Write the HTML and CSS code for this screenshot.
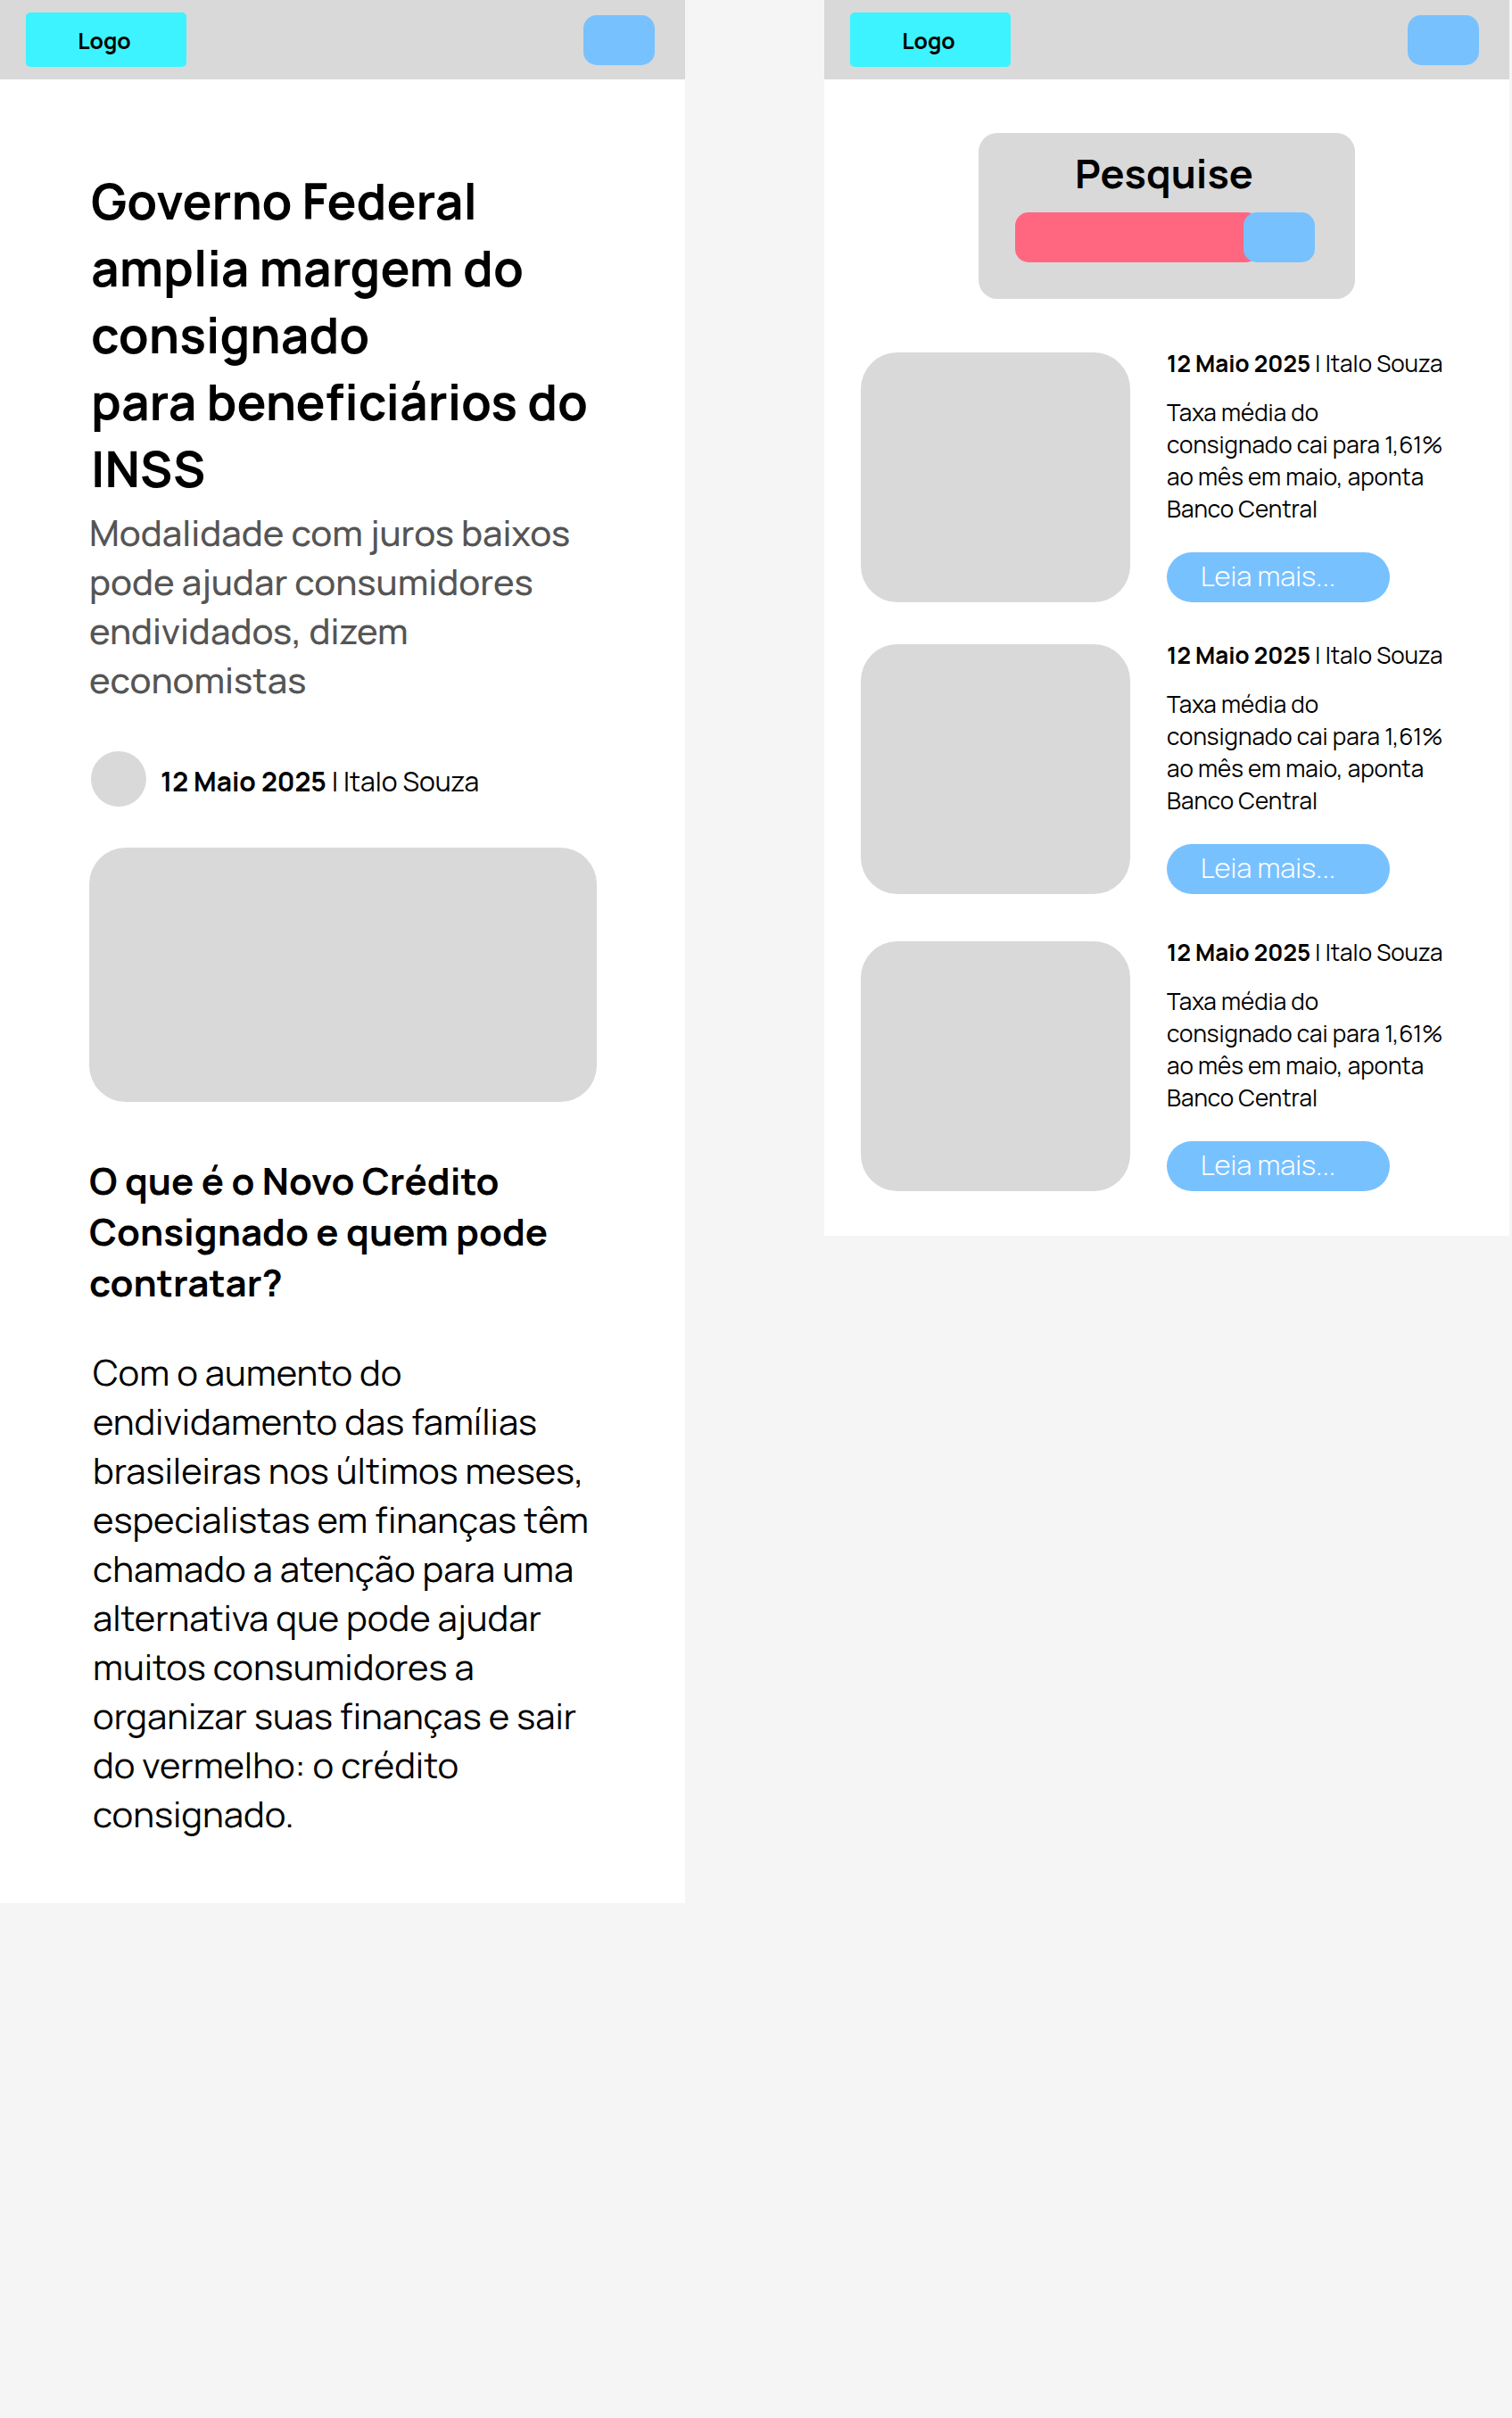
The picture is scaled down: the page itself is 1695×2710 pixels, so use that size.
FILE: index.html
```html
<!DOCTYPE html>
<html lang="pt-BR">
<head>
  <meta charset="utf-8">
  <meta name="viewport" content="width=device-width, initial-scale=1">
  <title>Crédito consignado</title>
  <link rel="stylesheet" href="styles.css">
</head>
<body class="board">
  <section class="screen">
    <header class="topbar">
      <a class="logo" href="#">Logo</a>
      <button class="square-button" type="button" aria-label="Menu"></button>
    </header>
    <main class="article">
      <h1 class="title">Governo Federal<br>amplia margem do<br>consignado<br>para beneficiários do<br>INSS</h1>
      <p class="subtitle">Modalidade com juros baixos<br>pode ajudar consumidores<br>endividados, dizem<br>economistas</p>
      <div class="byline">
        <span class="avatar"></span>
        <p class="byline-text"><strong>12 Maio 2025</strong> I Italo Souza</p>
      </div>
      <div class="cover"></div>
      <h2 class="section-title">O que é o Novo Crédito<br>Consignado e quem pode<br>contratar?</h2>
      <p class="body-text">Com o aumento do<br>endividamento das famílias<br>brasileiras nos últimos meses,<br>especialistas em finanças têm<br>chamado a atenção para uma<br>alternativa que pode ajudar<br>muitos consumidores a<br>organizar suas finanças e sair<br>do vermelho: o crédito<br>consignado.</p>
    </main>
  </section>

  <section class="screen">
    <header class="topbar">
      <a class="logo" href="#">Logo</a>
      <button class="square-button" type="button" aria-label="Menu"></button>
    </header>
    <main class="listing">
      <form class="search">
        <label class="search-label" for="q">Pesquise</label>
        <div class="search-row">
          <input class="search-input" id="q" type="text">
          <button class="square-button search-button" type="submit" aria-label="Buscar"></button>
        </div>
      </form>
      <div class="cards">
        <article class="card">
          <div class="thumb"></div>
          <div class="card-content">
            <p class="card-meta"><strong>12 Maio 2025</strong> I Italo Souza</p>
            <p class="card-text">Taxa média do<br>consignado cai para 1,61%<br>ao mês em maio, aponta<br>Banco Central</p>
            <a class="read-more" href="#">Leia mais...</a>
          </div>
        </article>
        <article class="card">
          <div class="thumb"></div>
          <div class="card-content">
            <p class="card-meta"><strong>12 Maio 2025</strong> I Italo Souza</p>
            <p class="card-text">Taxa média do<br>consignado cai para 1,61%<br>ao mês em maio, aponta<br>Banco Central</p>
            <a class="read-more" href="#">Leia mais...</a>
          </div>
        </article>
        <article class="card">
          <div class="thumb"></div>
          <div class="card-content">
            <p class="card-meta"><strong>12 Maio 2025</strong> I Italo Souza</p>
            <p class="card-text">Taxa média do<br>consignado cai para 1,61%<br>ao mês em maio, aponta<br>Banco Central</p>
            <a class="read-more" href="#">Leia mais...</a>
          </div>
        </article>
      </div>
    </main>
  </section>
</body>
</html>
```
FILE: styles.css
```css
* {
  box-sizing: border-box;
}

.board {
  display: flex;
  align-items: flex-start;
  gap: 156px;
  margin: 0;
  padding-right: 3px;
  background: #f5f5f5;
  color: #000;
  font-family: Manrope, Inter, sans-serif;
}

h1,
h2,
p {
  margin: 0;
}

.screen {
  flex: 1;
  min-width: 0;
  background: #fff;
}

/* Top bar */
.topbar {
  display: flex;
  align-items: center;
  justify-content: space-between;
  padding: 14px 34px 14px 29px;
  background: #d9d9d9;
}

.logo {
  width: 180px;
  padding: 2px 4px 0 0;
  border-radius: 5px;
  background: #3df3ff;
  color: #000;
  font-size: 25px;
  font-weight: 700;
  line-height: 59px;
  text-align: center;
  text-decoration: none;
}

.square-button {
  width: 80px;
  height: 56px;
  padding: 0;
  border: 0;
  border-radius: 15px;
  background: #78c1ff;
}

/* Article */
.article {
  padding: 99px 99px 73px 100px;
}

.title {
  padding-left: 2px;
  font-size: 55px;
  font-weight: 700;
  line-height: 75px;
}

.subtitle {
  margin-top: 6px;
  color: #555;
  font-size: 40px;
  font-weight: 500;
  line-height: 55px;
}

.byline {
  display: flex;
  align-items: flex-end;
  gap: 16px;
  margin-top: 53px;
  padding-left: 2px;
}

.avatar {
  width: 62px;
  height: 62px;
  border-radius: 50%;
  background: #d9d9d9;
}

.byline-text {
  font-size: 30px;
  line-height: 56px;
}

.cover {
  height: 285px;
  margin-top: 46px;
  border-radius: 41px;
  background: #d9d9d9;
}

.section-title {
  margin-top: 60px;
  font-size: 42px;
  font-weight: 700;
  line-height: 57px;
}

.body-text {
  margin-top: 44px;
  padding-left: 4px;
  font-size: 40px;
  line-height: 55px;
}

/* Listing */
.listing {
  padding: 60px 41px 50px;
}

.search {
  width: 422px;
  margin: 0 auto;
  padding: 15px 45px 41px 41px;
  border-radius: 21px;
  background: #d9d9d9;
}

.search-label {
  display: block;
  margin-bottom: 14px;
  padding-right: 2px;
  font-size: 45px;
  font-weight: 700;
  line-height: 60px;
  text-align: center;
}

.search-row {
  display: flex;
}

.search-input {
  flex: 1;
  min-width: 0;
  height: 56px;
  padding: 0 20px;
  border: 0;
  border-radius: 15px;
  background: #ff6780;
  font: inherit;
  font-size: 26px;
}

/* The button covers the rounded end of the text box */
.search-button {
  margin-left: -18px;
}

.cards {
  display: flex;
  flex-direction: column;
  gap: 47px;
  margin-top: 60px;
}

.card {
  display: grid;
  grid-template-columns: 302px 1fr;
  gap: 41px;
}

.card:last-child {
  margin-top: 6px;
}

.thumb {
  height: 280px;
  border-radius: 41px;
  background: #d9d9d9;
}

.card-content {
  display: flex;
  flex-direction: column;
  align-items: flex-start;
}

.card-meta {
  font-size: 26px;
  line-height: 24px;
}

.card-text {
  margin-top: 25px;
  font-size: 26px;
  line-height: 36px;
}

.read-more {
  width: 250px;
  margin-top: auto;
  padding: 0 0 4px 38px;
  border-radius: 28px;
  background: #78c1ff;
  color: #fff;
  font-size: 31px;
  font-weight: 300;
  line-height: 52px;
  text-decoration: none;
}
```
